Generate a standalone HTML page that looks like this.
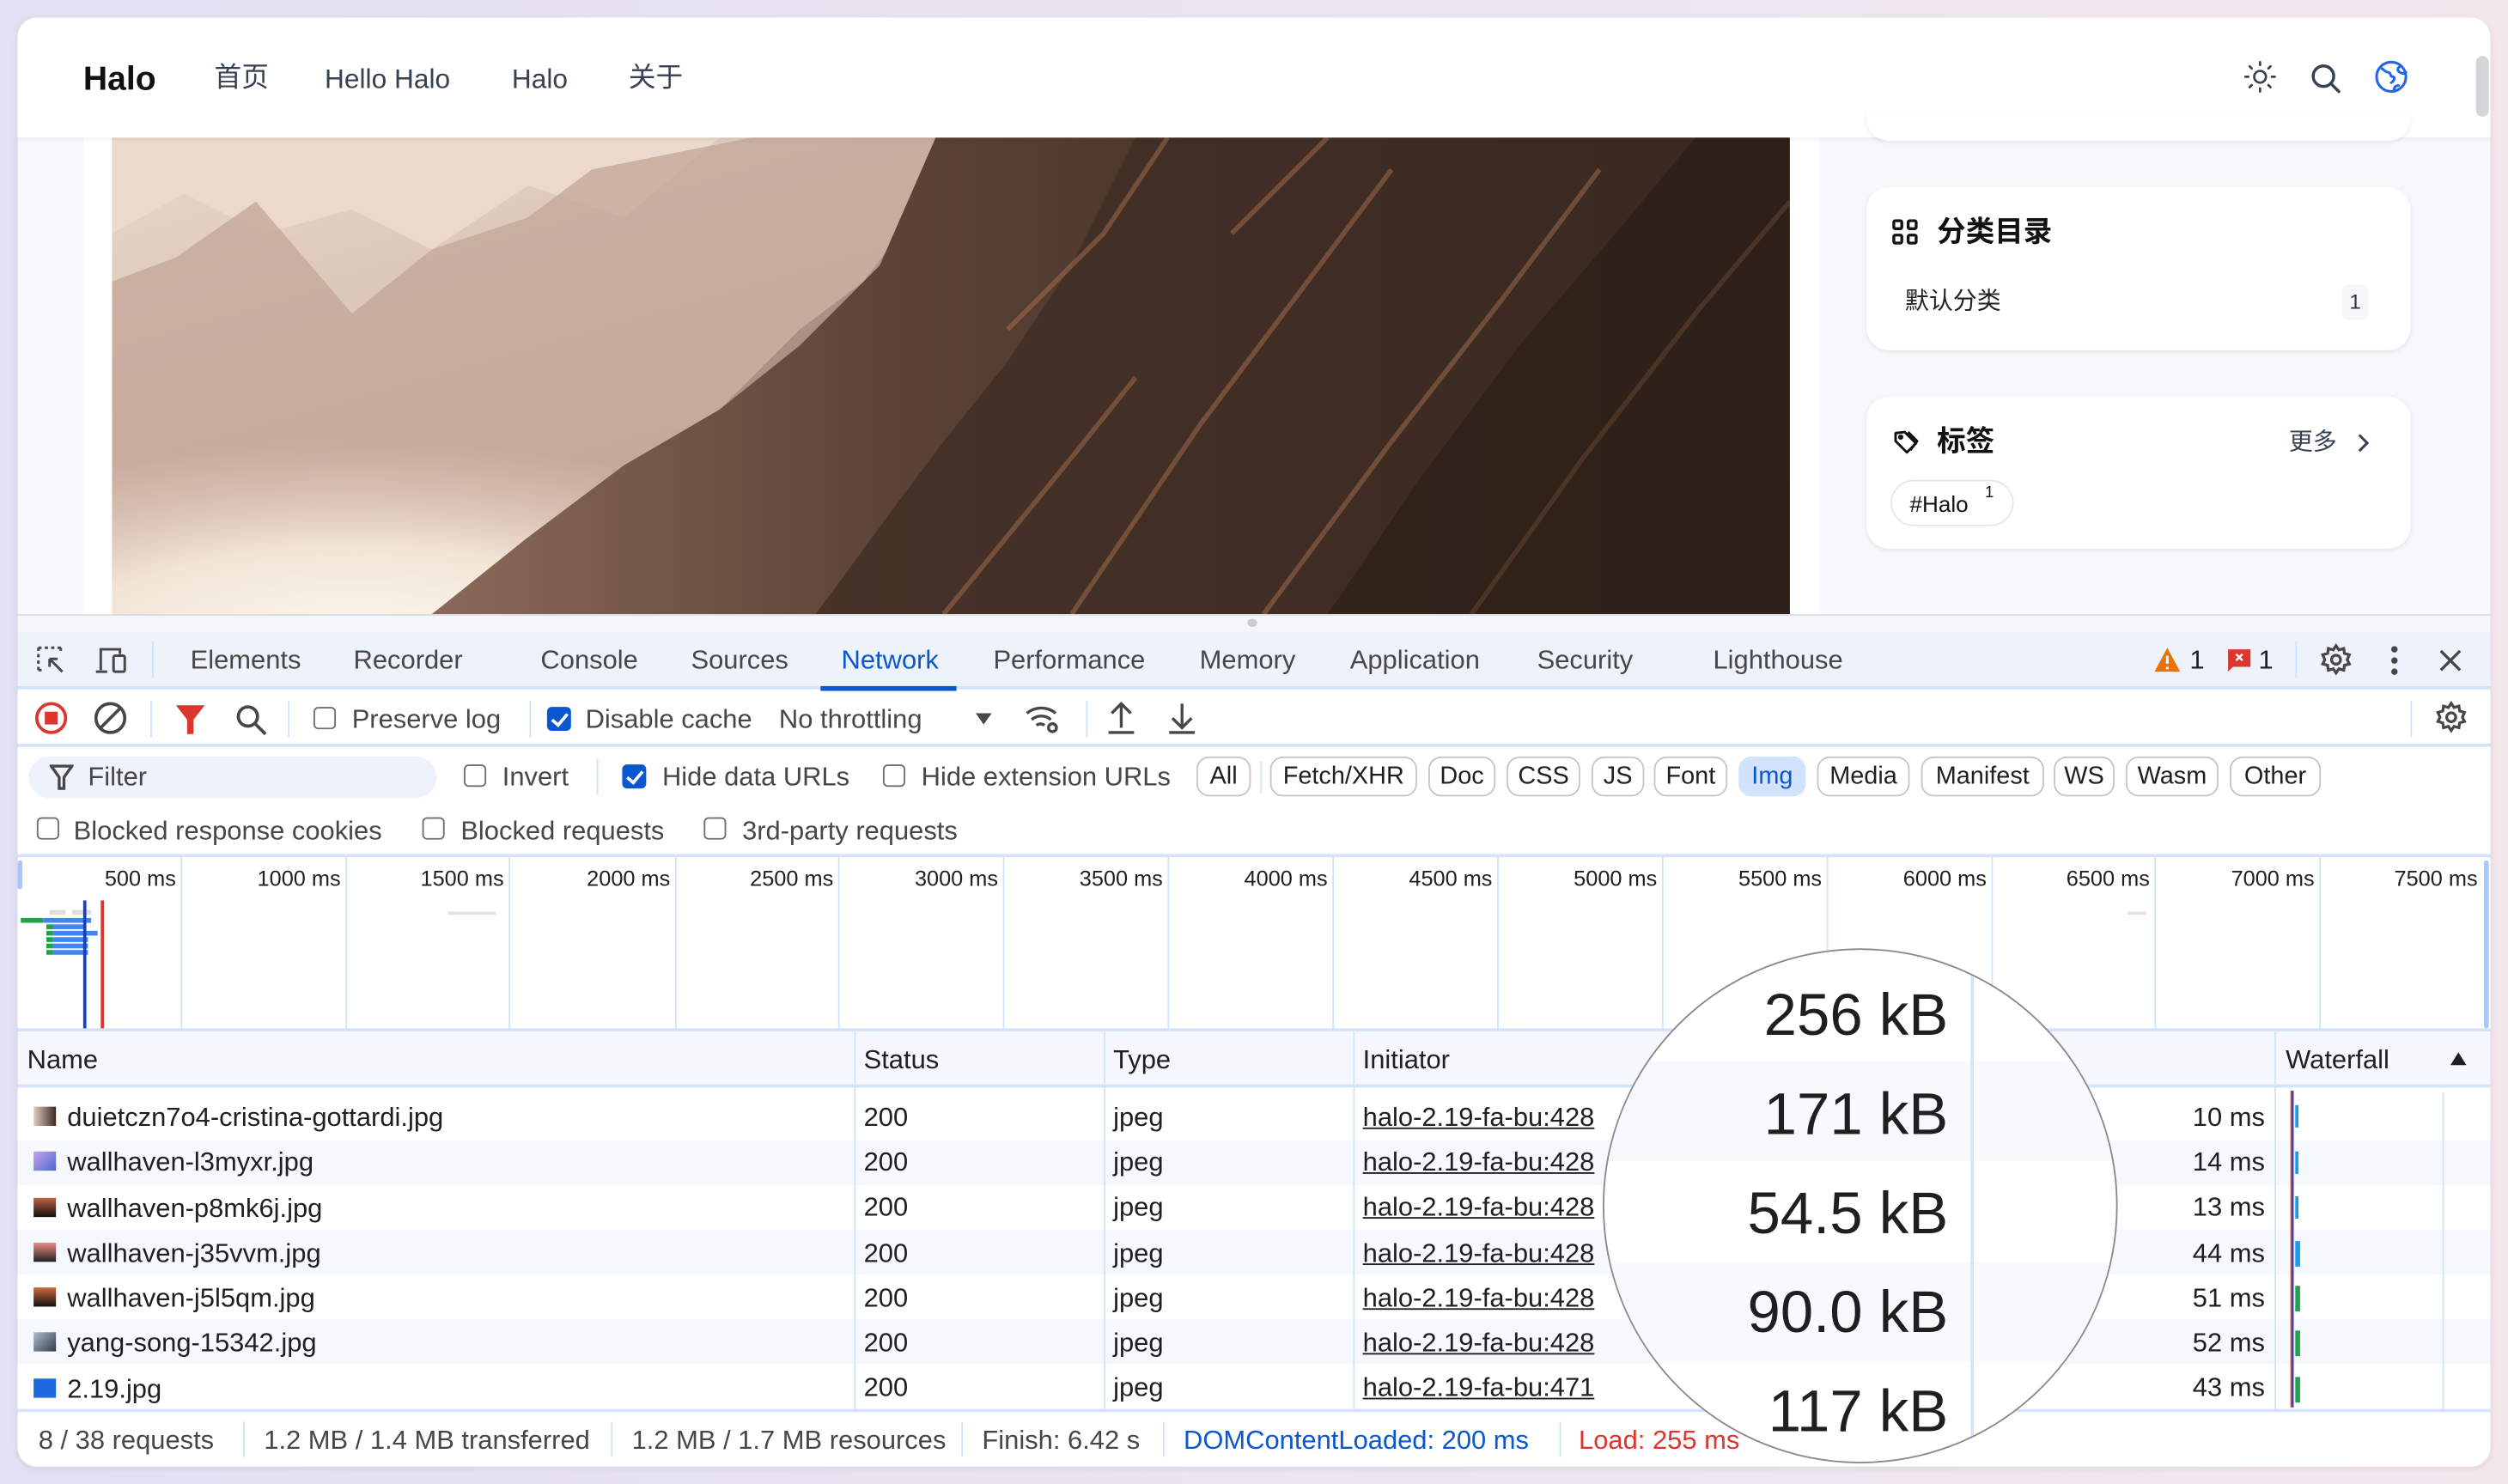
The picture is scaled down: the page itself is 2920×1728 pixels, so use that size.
<!DOCTYPE html>
<html><head><meta charset="utf-8"><style>
*{margin:0;padding:0;box-sizing:border-box}
html,body{width:2920px;height:1728px;overflow:hidden;background:linear-gradient(90deg,#e2e0f3,#ece6f2 60%,#f3e7ec)}
#w{position:absolute;left:0;top:0;width:1568px;height:928px;transform:scale(1.86224);transform-origin:0 0;font-family:"Liberation Sans","Noto Sans CJK SC",sans-serif;color:#1f1f1f}
.a{position:absolute}
.t{position:absolute;white-space:nowrap;line-height:1}
.tab{font-size:16.6px;color:#474747;top:405px}
.cb{position:absolute;width:14px;height:14px;border:1.5px solid #6f6f6f;border-radius:3px;background:#fff}
.cbk{position:absolute;width:15px;height:15px;border-radius:3px;background:#0b57d0}
.cbk:after{content:"";position:absolute;left:5px;top:1.5px;width:4px;height:8px;border:solid #fff;border-width:0 2px 2px 0;transform:rotate(40deg)}
.lbl{font-size:16.6px;color:#474747}
.btn{position:absolute;top:473px;height:25px;border:1px solid #c4c7c5;border-radius:8px;font-size:15.5px;color:#1f1f1f;text-align:center;line-height:23px}
.vl{position:absolute;width:1px;background:#d3e3fd}
.tl{position:absolute;top:542px;font-size:13.6px;color:#1f1f1f;text-align:right;width:80px}
.row{position:absolute;left:11px;width:1546px;height:28px}
.rt{position:absolute;font-size:16.6px;color:#1f1f1f;white-space:nowrap;line-height:1}
.big{position:absolute;font-size:37px;right:105px;color:#1f1f1f;line-height:1;white-space:nowrap}
</style></head><body><div id="w">
<div class="a" style="left:11px;top:11px;width:1546px;height:906px;background:#fff;border-radius:12px;overflow:hidden;box-shadow:0 1px 4px rgba(0,0,0,.08)">
 <div class="a" style="left:0;top:75px;width:1546px;height:299px;background:#f7f8fb"></div>
 <div class="a" style="left:41px;top:75px;width:1086px;height:299px;background:#fff"></div>
 <svg class="a" style="left:59px;top:75px" width="1049" height="298" viewBox="0 0 1049 298">
  <defs>
   <linearGradient id="sky" x1="0" y1="0" x2="1" y2="1"><stop offset="0" stop-color="#e8d8cb"/><stop offset=".5" stop-color="#cfb6a8"/><stop offset="1" stop-color="#a88d82"/></linearGradient>
   <linearGradient id="dk" x1="0" y1="0" x2="1" y2="0"><stop offset="0" stop-color="#8a6a5a"/><stop offset=".35" stop-color="#5a4236"/><stop offset="1" stop-color="#2e2019"/></linearGradient>
   <radialGradient id="fog" cx=".35" cy=".8" r=".55"><stop offset="0" stop-color="#fffaf2"/><stop offset=".5" stop-color="#f7ebde" stop-opacity=".9"/><stop offset="1" stop-color="#e6d0c0" stop-opacity="0"/></radialGradient>
  </defs>
  <rect width="1049" height="298" fill="url(#sky)"/>
  <polygon points="0,60 45,35 95,60 150,45 200,70 260,30 320,50 380,0 0,0" fill="#ead9cc"/>
  <polygon points="0,90 40,75 90,40 150,110 200,70 260,50 300,20 400,0 560,0 460,298 0,298" fill="#c2a597" opacity=".75"/>
  <polygon points="300,230 380,170 430,120 470,90 500,50 540,30 560,0 600,0 560,80 500,200 440,298 300,298" fill="#9b7f74" opacity=".6"/>
  <ellipse cx="250" cy="250" rx="330" ry="120" fill="url(#fog)"/>
  <polygon points="200,298 260,250 320,205 380,170 430,130 480,80 515,0 1049,0 1049,298" fill="url(#dk)"/>
  <polygon points="440,298 490,230 520,190 560,140 600,80 640,0 1049,0 1049,298" fill="#3e2c23" opacity=".75"/>
  <path d="M520,298 L600,200 L640,150 M600,298 L680,180 L740,100 L800,20 M720,298 L800,190 L870,100 L930,20 M850,298 L920,200 L990,110 L1049,40 M560,120 L620,60 L660,0 M700,60 L760,0" stroke="#a5704f" stroke-width="3" fill="none" opacity=".5"/>
  <polygon points="760,298 820,210 880,130 940,60 990,0 1049,0 1049,298" fill="#22160f" opacity=".45"/>
 </svg>
 <div class="a" style="left:0;top:0;width:1546px;height:75px;background:#fff;box-shadow:0 1px 3px rgba(0,0,0,.07)"></div>
 <div class="t" style="left:41px;top:28px;font-size:21px;font-weight:600;color:#111">Halo</div>
 <div class="t" style="left:123px;top:29px;font-size:17px;color:#374151">首页</div>
 <div class="t" style="left:192px;top:30px;font-size:17px;color:#374151">Hello Halo</div>
 <div class="t" style="left:309px;top:30px;font-size:17px;color:#374151">Halo</div>
 <div class="t" style="left:382px;top:29px;font-size:17px;color:#374151">关于</div>
 <svg class="a" style="left:1391px;top:26px" width="22" height="22" viewBox="0 0 24 24" fill="none" stroke="#374151" stroke-width="1.6" stroke-linecap="round"><circle cx="12" cy="12" r="4"/><path d="M12 2v2M12 20v2M2 12h2M20 12h2M4.9 4.9l1.4 1.4M17.7 17.7l1.4 1.4M4.9 19.1l1.4-1.4M17.7 6.3l1.4-1.4"/></svg>
 <svg class="a" style="left:1432px;top:27px" width="22" height="22" viewBox="0 0 24 24" fill="none" stroke="#374151" stroke-width="2" stroke-linecap="round"><circle cx="10.5" cy="10.5" r="7"/><path d="M16 16l5 5"/></svg>
 <svg class="a" style="left:1473px;top:26px" width="22" height="22" viewBox="0 0 24 24" fill="none" stroke="#2563eb" stroke-width="1.8" stroke-linecap="round"><circle cx="12" cy="12" r="10"/><path d="M5 6c2 1 3 3 5 3s1 3 3 3 1 3-1 4M18 5c-2 1-2 3 0 4s3 1 4 0M14 21c0-2 1-3 3-3"/></svg>
 <div class="a" style="left:1537px;top:24px;width:8px;height:38px;background:#d5d5d8;border-radius:4px"></div>
 <div class="a" style="left:1156px;top:60px;width:340px;height:17px;background:#fff;border-radius:0 0 14px 14px;box-shadow:0 1px 3px rgba(0,0,0,.08)"></div>
 <div class="a" style="left:1156px;top:106px;width:340px;height:102px;background:#fff;border-radius:14px;box-shadow:0 1px 3px rgba(0,0,0,.08)"></div>
 <svg class="a" style="left:1172px;top:126px" width="16" height="16" viewBox="0 0 16 16" fill="none" stroke="#111" stroke-width="1.8"><rect x="1" y="1" width="5" height="5" rx="1"/><rect x="10" y="1" width="5" height="5" rx="1"/><rect x="1" y="10" width="5" height="5" rx="1"/><rect x="10" y="10" width="5" height="5" rx="1"/></svg>
 <div class="t" style="left:1200px;top:125px;font-size:18px;font-weight:600;color:#111">分类目录</div>
 <div class="t" style="left:1180px;top:170px;font-size:15px;color:#222">默认分类</div>
 <div class="a" style="left:1453px;top:167px;width:17px;height:22px;background:#f6f7f9;border-radius:4px;font-size:13px;text-align:center;line-height:22px;color:#333">1</div>
 <div class="a" style="left:1156px;top:237px;width:340px;height:95px;background:#fff;border-radius:14px;box-shadow:0 1px 3px rgba(0,0,0,.08)"></div>
 <svg class="a" style="left:1172px;top:257px" width="17" height="17" viewBox="0 0 24 24" fill="none" stroke="#111" stroke-width="2.2" stroke-linejoin="round"><path d="M3 4l8-1 10 10-8 8L3 11z"/><circle cx="7.5" cy="7.5" r="1.2"/><path d="M14 3l8 8-6 8"/></svg>
 <div class="t" style="left:1200px;top:256px;font-size:18px;font-weight:600;color:#111">标签</div>
 <div class="t" style="left:1420px;top:258px;font-size:15px;color:#374151">更多</div>
 <svg class="a" style="left:1459px;top:258px" width="14" height="16" viewBox="0 0 14 16" fill="none" stroke="#374151" stroke-width="1.6"><path d="M5 3l5 5-5 5"/></svg>
 <div class="a" style="left:1171px;top:289px;width:77px;height:29px;border:1px solid #e5e7eb;border-radius:15px"></div>
 <div class="t" style="left:1183px;top:297px;font-size:14px;color:#111">#Halo</div>
 <div class="t" style="left:1230px;top:293px;font-size:10px;color:#111">1</div>
</div>

<div class="a" style="left:11px;top:384px;width:1546px;height:11px;background:#f4f6fa;border-top:1px solid #d9dce3"></div>
<div class="a" style="left:780px;top:387px;width:6px;height:5px;border-radius:3px;background:#ccc"></div>
<div class="a" style="left:11px;top:395px;width:1546px;height:36px;background:#eef3fb;border-bottom:2px solid #d3e3fd"></div>
<div class="a" style="left:513px;top:429px;width:85px;height:3px;background:#0b57d0"></div>
<svg class="a" style="left:22px;top:403px" width="22" height="20" viewBox="0 0 22 20" fill="none" stroke="#474747" stroke-width="1.6"><path d="M2 2h14M2 2v14M16 2v3M2 16h3" stroke-dasharray="2 2"/><path d="M9 9l8 8M9 9h5M9 9v5"/></svg>
<svg class="a" style="left:59px;top:403px" width="22" height="20" viewBox="0 0 22 20" fill="none" stroke="#474747" stroke-width="1.6"><path d="M4 16V3h12v3M1 17h7"/><rect x="12" y="7" width="7" height="10" rx="1"/></svg>
<div class="vl" style="left:95px;top:401px;height:23px"></div>
<div class="t tab" style="left:119px">Elements</div>
<div class="t tab" style="left:221px">Recorder</div>
<div class="t tab" style="left:338px">Console</div>
<div class="t tab" style="left:432px">Sources</div>
<div class="t tab" style="left:526px;color:#0b57d0">Network</div>
<div class="t tab" style="left:621px">Performance</div>
<div class="t tab" style="left:750px">Memory</div>
<div class="t tab" style="left:844px">Application</div>
<div class="t tab" style="left:961px">Security</div>
<div class="t tab" style="left:1071px">Lighthouse</div>
<svg class="a" style="left:1346px;top:404px" width="18" height="17" viewBox="0 0 18 17"><path d="M9 1L17 16H1z" fill="#e8710a"/><path d="M9 6v5M9 13v1.5" stroke="#fff" stroke-width="1.6"/></svg>
<div class="t tab" style="left:1369px;color:#1f1f1f">1</div>
<svg class="a" style="left:1392px;top:405px" width="16" height="16" viewBox="0 0 16 16"><path d="M1 1h14v11H4l-3 3z" fill="#dc362e"/><path d="M6 4l4 4M10 4l-4 4" stroke="#fff" stroke-width="1.3"/></svg>
<div class="t tab" style="left:1412px;color:#1f1f1f">1</div>
<div class="vl" style="left:1435px;top:401px;height:23px"></div>
<svg class="a" style="left:1450px;top:402px" width="21" height="21" viewBox="0 0 24 24" fill="none" stroke="#474747" stroke-width="2"><circle cx="12" cy="12" r="3.2"/><path d="M12 2l2 3 3.5-1 .5 3.5 3.5 1-1.5 3.5 1.5 3-3.5 1-.5 3.5-3.5-1-2 3-2-3-3.5 1-.5-3.5-3.5-1 1.5-3-1.5-3.5 3.5-1L6.5 4 10 5z"/></svg>
<svg class="a" style="left:1493px;top:403px" width="8" height="20" viewBox="0 0 8 20" fill="#474747"><circle cx="4" cy="3" r="2"/><circle cx="4" cy="10" r="2"/><circle cx="4" cy="17" r="2"/></svg>
<svg class="a" style="left:1524px;top:405px" width="16" height="16" viewBox="0 0 16 16" stroke="#474747" stroke-width="1.8"><path d="M2 2l12 12M14 2L2 14"/></svg>

<div class="a" style="left:11px;top:432px;width:1546px;height:35px;background:#fff;border-bottom:2px solid #d3e3fd"></div>
<svg class="a" style="left:21px;top:438px" width="22" height="22" viewBox="0 0 22 22"><circle cx="11" cy="11" r="9" fill="none" stroke="#dc362e" stroke-width="2"/><rect x="7" y="7" width="8" height="8" fill="#dc362e"/></svg>
<svg class="a" style="left:58px;top:438px" width="22" height="22" viewBox="0 0 22 22" fill="none" stroke="#474747" stroke-width="2"><circle cx="11" cy="11" r="9"/><path d="M5 17L17 5"/></svg>
<div class="vl" style="left:94px;top:438px;height:23px"></div>
<svg class="a" style="left:109px;top:440px" width="20" height="20" viewBox="0 0 20 20"><path d="M1 1h18l-7 9v9h-4v-9z" fill="#dc362e"/></svg>
<svg class="a" style="left:146px;top:439px" width="22" height="22" viewBox="0 0 22 22" fill="none" stroke="#474747" stroke-width="2"><circle cx="9" cy="9" r="6"/><path d="M13.5 13.5L20 20"/></svg>
<div class="vl" style="left:180px;top:438px;height:23px"></div>
<div class="cb" style="left:196px;top:442px"></div>
<div class="t lbl" style="left:220px;top:442px">Preserve log</div>
<div class="vl" style="left:331px;top:438px;height:23px"></div>
<div class="cbk" style="left:342px;top:442px"></div>
<div class="t lbl" style="left:366px;top:442px">Disable cache</div>
<div class="t lbl" style="left:487px;top:442px">No throttling</div>
<svg class="a" style="left:609px;top:445px" width="12" height="9" viewBox="0 0 12 9"><path d="M1 1h10L6 8z" fill="#474747"/></svg>
<svg class="a" style="left:640px;top:438px" width="24" height="22" viewBox="0 0 24 22" fill="none" stroke="#474747" stroke-width="1.8"><path d="M2 8a14 14 0 0 1 18 0M5 12a9 9 0 0 1 12 0M8 15.5a4 4 0 0 1 5 0"/><circle cx="18" cy="17" r="2.5"/></svg>
<div class="vl" style="left:679px;top:438px;height:23px"></div>
<svg class="a" style="left:691px;top:438px" width="20" height="22" viewBox="0 0 20 22" fill="none" stroke="#474747" stroke-width="1.8"><path d="M10 17V2M4 8l6-6 6 6M2 20h16"/></svg>
<svg class="a" style="left:729px;top:438px" width="20" height="22" viewBox="0 0 20 22" fill="none" stroke="#474747" stroke-width="1.8"><path d="M10 2v15M4 11l6 6 6-6M2 20h16"/></svg>
<div class="vl" style="left:1507px;top:438px;height:23px"></div>
<svg class="a" style="left:1522px;top:438px" width="21" height="21" viewBox="0 0 24 24" fill="none" stroke="#474747" stroke-width="2"><circle cx="12" cy="12" r="3.2"/><path d="M12 2l2 3 3.5-1 .5 3.5 3.5 1-1.5 3.5 1.5 3-3.5 1-.5 3.5-3.5-1-2 3-2-3-3.5 1-.5-3.5-3.5-1 1.5-3-1.5-3.5 3.5-1L6.5 4 10 5z"/></svg>

<div class="a" style="left:18px;top:473px;width:255px;height:26px;background:#eef3fb;border-radius:13px"></div>
<svg class="a" style="left:31px;top:478px" width="15" height="16" viewBox="0 0 15 16" fill="none" stroke="#474747" stroke-width="1.8"><path d="M1 1h13L9 8v7H6V8z"/></svg>
<div class="t lbl" style="left:55px;top:478px">Filter</div>
<div class="cb" style="left:290px;top:478px"></div>
<div class="t lbl" style="left:314px;top:478px">Invert</div>
<div class="vl" style="left:373px;top:474px;height:23px"></div>
<div class="cbk" style="left:389px;top:478px"></div>
<div class="t lbl" style="left:414px;top:478px">Hide data URLs</div>
<div class="cb" style="left:552px;top:478px"></div>
<div class="t lbl" style="left:576px;top:478px">Hide extension URLs</div>
<div class="btn" style="left:748px;width:34px">All</div>
<div class="vl" style="left:788px;top:476px;height:20px"></div>
<div class="btn" style="left:794px;width:92px">Fetch/XHR</div>
<div class="btn" style="left:893px;width:42px">Doc</div>
<div class="btn" style="left:942px;width:46px">CSS</div>
<div class="btn" style="left:995px;width:33px">JS</div>
<div class="btn" style="left:1034px;width:46px">Font</div>
<div class="btn" style="left:1087px;width:42px;background:#d3e3fd;border-color:#d3e3fd;color:#0b57d0">Img</div>
<div class="btn" style="left:1136px;width:58px">Media</div>
<div class="btn" style="left:1201px;width:77px">Manifest</div>
<div class="btn" style="left:1284px;width:38px">WS</div>
<div class="btn" style="left:1329px;width:58px">Wasm</div>
<div class="btn" style="left:1394px;width:57px">Other</div>
<div class="cb" style="left:23px;top:511px"></div>
<div class="t lbl" style="left:46px;top:512px">Blocked response cookies</div>
<div class="cb" style="left:264px;top:511px"></div>
<div class="t lbl" style="left:288px;top:512px">Blocked requests</div>
<div class="cb" style="left:440px;top:511px"></div>
<div class="t lbl" style="left:464px;top:512px">3rd-party requests</div>
<div class="a" style="left:11px;top:534px;width:1546px;height:2px;background:#d3e3fd"></div>

<div class="vl" style="left:113px;top:536px;height:107px"></div>
<div class="vl" style="left:216px;top:536px;height:107px"></div>
<div class="vl" style="left:318px;top:536px;height:107px"></div>
<div class="vl" style="left:422px;top:536px;height:107px"></div>
<div class="vl" style="left:524px;top:536px;height:107px"></div>
<div class="vl" style="left:627px;top:536px;height:107px"></div>
<div class="vl" style="left:730px;top:536px;height:107px"></div>
<div class="vl" style="left:833px;top:536px;height:107px"></div>
<div class="vl" style="left:936px;top:536px;height:107px"></div>
<div class="vl" style="left:1039px;top:536px;height:107px"></div>
<div class="vl" style="left:1142px;top:536px;height:107px"></div>
<div class="vl" style="left:1245px;top:536px;height:107px"></div>
<div class="vl" style="left:1347px;top:536px;height:107px"></div>
<div class="vl" style="left:1450px;top:536px;height:107px"></div>
<div class="a" style="left:11px;top:538px;width:3px;height:18px;background:#a8c7fa;border-radius:2px"></div>
<div class="a" style="left:1553px;top:538px;width:3px;height:105px;background:#a8c7fa;border-radius:2px"></div>
<div class="tl" style="left:30px">500 ms</div>
<div class="tl" style="left:133px">1000 ms</div>
<div class="tl" style="left:235px">1500 ms</div>
<div class="tl" style="left:339px">2000 ms</div>
<div class="tl" style="left:441px">2500 ms</div>
<div class="tl" style="left:544px">3000 ms</div>
<div class="tl" style="left:647px">3500 ms</div>
<div class="tl" style="left:750px">4000 ms</div>
<div class="tl" style="left:853px">4500 ms</div>
<div class="tl" style="left:956px">5000 ms</div>
<div class="tl" style="left:1059px">5500 ms</div>
<div class="tl" style="left:1162px">6000 ms</div>
<div class="tl" style="left:1264px">6500 ms</div>
<div class="tl" style="left:1367px">7000 ms</div>
<div class="tl" style="left:1469px">7500 ms</div>
<svg class="a" style="left:11px;top:560px" width="80" height="40" viewBox="0 0 80 40">
 <rect x="20" y="9" width="10" height="3" fill="#ddd"/><rect x="34" y="9" width="12" height="3" fill="#ddd"/>
 <rect x="2" y="14" width="14" height="3" fill="#1ea446"/><rect x="16" y="14" width="30" height="3" fill="#4285f4"/>
 <rect x="18" y="18" width="4" height="3" fill="#1ea446"/><rect x="22" y="18" width="20" height="3" fill="#4285f4"/>
 <rect x="18" y="22" width="4" height="3" fill="#1ea446"/><rect x="22" y="22" width="28" height="3" fill="#4285f4"/>
 <rect x="18" y="26" width="4" height="3" fill="#1ea446"/><rect x="22" y="26" width="22" height="3" fill="#4285f4"/>
 <rect x="18" y="30" width="4" height="3" fill="#1ea446"/><rect x="22" y="30" width="22" height="3" fill="#4285f4"/>
 <rect x="18" y="34" width="4" height="3" fill="#1ea446"/><rect x="22" y="34" width="22" height="3" fill="#4285f4"/>
</svg>
<div class="a" style="left:280px;top:570px;width:30px;height:2px;background:#e2e2e2"></div>
<div class="a" style="left:1330px;top:570px;width:12px;height:2px;background:#e2e2e2"></div>
<div class="a" style="left:52px;top:563px;width:1.5px;height:80px;background:#1a3fc4"></div>
<div class="a" style="left:63px;top:563px;width:1.5px;height:80px;background:#dc362e"></div>
<div class="a" style="left:11px;top:643px;width:1546px;height:2px;background:#d3e3fd"></div>

<div class="a" style="left:11px;top:645px;width:1546px;height:35px;background:#f5f7fc;border-bottom:2px solid #d3e3fd"></div>
<div class="rt" style="left:17px;top:655px">Name</div>
<div class="rt" style="left:540px;top:655px">Status</div>
<div class="rt" style="left:696px;top:655px">Type</div>
<div class="rt" style="left:852px;top:655px">Initiator</div>
<div class="rt" style="left:1429px;top:655px">Waterfall</div>
<svg class="a" style="left:1531px;top:657px" width="12" height="10" viewBox="0 0 12 10"><path d="M1 9h10L6 1z" fill="#1f1f1f"/></svg>

<div class="row" style="top:713px;background:#f5f8fd"></div>
<div class="row" style="top:769px;background:#f5f8fd"></div>
<div class="row" style="top:825px;background:#f5f8fd"></div>
<div class="vl" style="left:534px;top:645px;height:236px"></div>
<div class="vl" style="left:690px;top:645px;height:236px"></div>
<div class="vl" style="left:846px;top:645px;height:236px"></div>
<div class="vl" style="left:1422px;top:645px;height:236px"></div>
<div class="vl" style="left:1527px;top:683px;height:198px"></div>

<div class="a" style="left:21px;top:692px;width:14px;height:12px;background:linear-gradient(90deg,#e2cdbf,#3a2a22)"></div>
<div class="a" style="left:21px;top:720px;width:14px;height:12px;background:linear-gradient(135deg,#c8a0f0,#4a6ad0)"></div>
<div class="a" style="left:21px;top:749px;width:14px;height:12px;background:linear-gradient(180deg,#c06040,#111)"></div>
<div class="a" style="left:21px;top:777px;width:14px;height:12px;background:linear-gradient(180deg,#f08a8a,#222)"></div>
<div class="a" style="left:21px;top:805px;width:14px;height:12px;background:linear-gradient(180deg,#d06a40,#111)"></div>
<div class="a" style="left:21px;top:833px;width:14px;height:12px;background:linear-gradient(135deg,#b0c0d0,#303848)"></div>
<div class="a" style="left:21px;top:862px;width:14px;height:12px;background:#1e6ae0"></div>

<div class="rt" style="left:42px;top:691px">duietczn7o4-cristina-gottardi.jpg</div>
<div class="rt" style="left:42px;top:719px">wallhaven-l3myxr.jpg</div>
<div class="rt" style="left:42px;top:748px">wallhaven-p8mk6j.jpg</div>
<div class="rt" style="left:42px;top:776px">wallhaven-j35vvm.jpg</div>
<div class="rt" style="left:42px;top:804px">wallhaven-j5l5qm.jpg</div>
<div class="rt" style="left:42px;top:832px">yang-song-15342.jpg</div>
<div class="rt" style="left:42px;top:861px">2.19.jpg</div>
<div class="rt" style="left:540px;top:685px;line-height:28.2px;white-space:normal">200<br>200<br>200<br>200<br>200<br>200<br>200</div>
<div class="rt" style="left:696px;top:685px;line-height:28.2px;white-space:normal">jpeg<br>jpeg<br>jpeg<br>jpeg<br>jpeg<br>jpeg<br>jpeg</div>
<div class="rt" style="left:852px;top:685px;line-height:28.2px;white-space:normal;text-decoration:underline">halo-2.19-fa-bu:428<br>halo-2.19-fa-bu:428<br>halo-2.19-fa-bu:428<br>halo-2.19-fa-bu:428<br>halo-2.19-fa-bu:428<br>halo-2.19-fa-bu:428<br>halo-2.19-fa-bu:471</div>
<div class="rt" style="left:1336px;width:80px;text-align:right;top:685px;line-height:28.2px;white-space:normal">10 ms<br>14 ms<br>13 ms<br>44 ms<br>51 ms<br>52 ms<br>43 ms</div>
<div class="a" style="left:1432px;top:682px;width:1px;height:198px;background:#dc362e"></div>
<div class="a" style="left:1433px;top:682px;width:1px;height:198px;background:#1a3fc4"></div>
<div class="a" style="left:1435px;top:691px;width:2px;height:14px;background:#1a9be8"></div>
<div class="a" style="left:1435px;top:720px;width:2px;height:14px;background:#1a9be8"></div>
<div class="a" style="left:1435px;top:748px;width:2px;height:14px;background:#1a9be8"></div>
<div class="a" style="left:1435px;top:776px;width:3px;height:16px;background:#1a9be8"></div>
<div class="a" style="left:1435px;top:804px;width:3px;height:16px;background:#1ea446"></div>
<div class="a" style="left:1435px;top:832px;width:3px;height:16px;background:#1ea446"></div>
<div class="a" style="left:1435px;top:861px;width:3px;height:16px;background:#1ea446"></div>

<div class="a" style="left:11px;top:881px;width:1546px;height:2px;background:#d3e3fd"></div>
<div class="a" style="left:11px;top:883px;width:1546px;height:34px;background:#fff;border-radius:0 0 12px 12px"></div>
<div class="rt" style="left:24px;top:893px;color:#474747">8 / 38 requests</div>
<div class="vl" style="left:152px;top:889px;height:22px"></div>
<div class="rt" style="left:165px;top:893px;color:#474747">1.2 MB / 1.4 MB transferred</div>
<div class="vl" style="left:382px;top:889px;height:22px"></div>
<div class="rt" style="left:395px;top:893px;color:#474747">1.2 MB / 1.7 MB resources</div>
<div class="vl" style="left:601px;top:889px;height:22px"></div>
<div class="rt" style="left:614px;top:893px;color:#474747">Finish: 6.42 s</div>
<div class="vl" style="left:727px;top:889px;height:22px"></div>
<div class="rt" style="left:740px;top:893px;color:#0b57d0">DOMContentLoaded: 200 ms</div>
<div class="vl" style="left:975px;top:889px;height:22px"></div>
<div class="rt" style="left:987px;top:893px;color:#dc362e">Load: 255 ms</div>

<div class="a" style="left:1002px;top:593px;width:322px;height:322px;border-radius:50%;background:#fff;border:1.5px solid #8a8a8a;overflow:hidden">
 <div class="a" style="left:0;top:70px;width:322px;height:62px;background:#f7f9fd"></div>
 <div class="a" style="left:0;top:195px;width:322px;height:62px;background:#f7f9fd"></div>
 <div class="a" style="left:229px;top:0;width:1.5px;height:322px;background:#d3e3fd"></div>
 <div class="big" style="top:22px">256 kB</div>
 <div class="big" style="top:84px">171 kB</div>
 <div class="big" style="top:146px">54.5 kB</div>
 <div class="big" style="top:208px">90.0 kB</div>
 <div class="big" style="top:270px">117 kB</div>
</div>
</div></body></html>
